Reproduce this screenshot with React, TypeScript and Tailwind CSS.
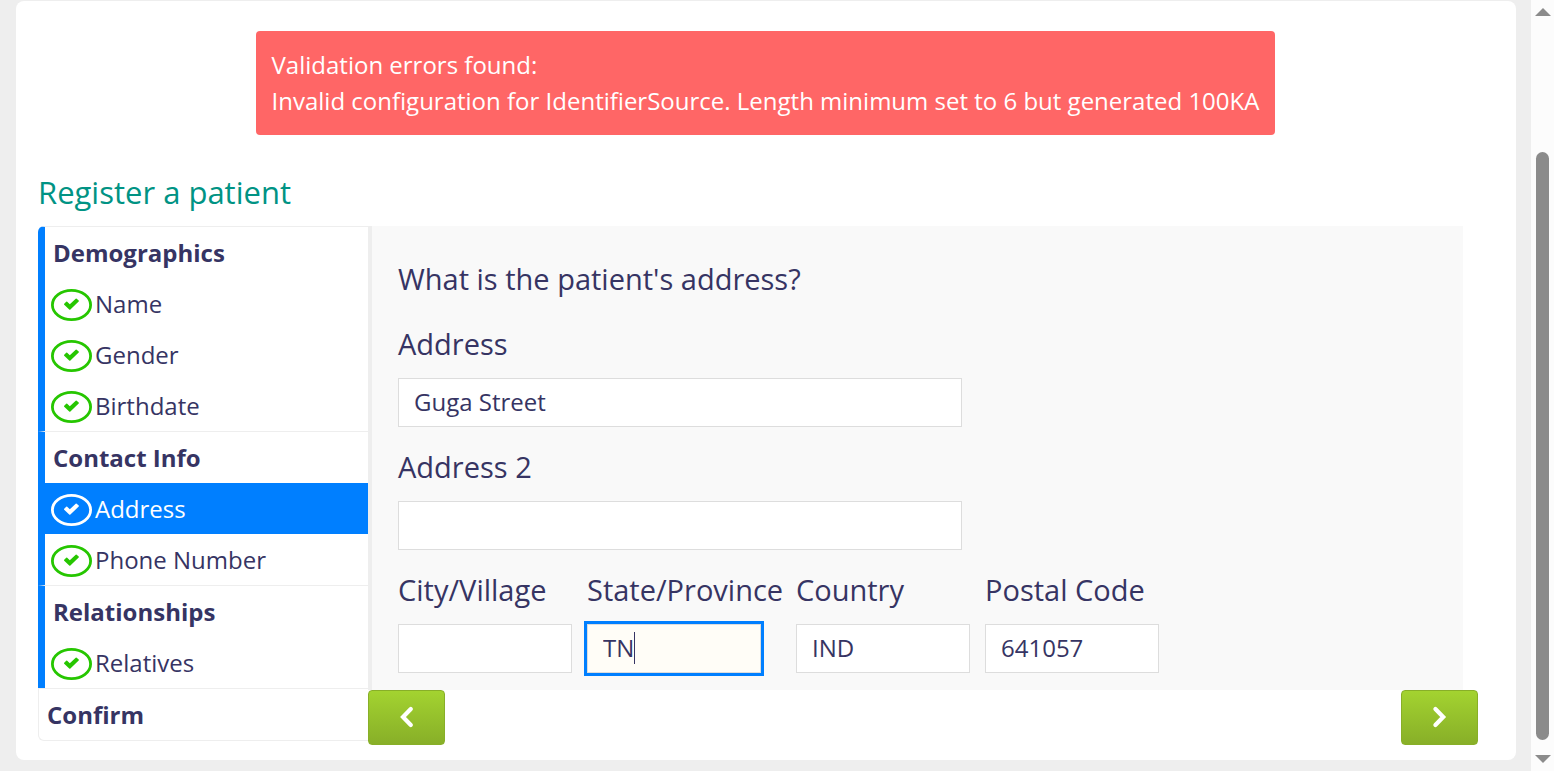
import React, { useState } from 'react';

type Step = { label: string; active?: boolean };
type Section = { title: string; steps: Step[] };

const sections: Section[] = [
  { title: 'Demographics', steps: [{ label: 'Name' }, { label: 'Gender' }, { label: 'Birthdate' }] },
  { title: 'Contact Info', steps: [{ label: 'Address', active: true }, { label: 'Phone Number' }] },
  { title: 'Relationships', steps: [{ label: 'Relatives' }] },
];

function CheckBadge() {
  return (
    <svg className="mt-[3px] h-8 w-[41px] shrink-0" viewBox="0 0 41 32" fill="none" aria-hidden="true">
      <ellipse cx="20.5" cy="16" rx="19.1" ry="14.6" stroke="currentColor" strokeWidth="2.8" />
      <path
        d="M13.2 14.8l2-2q.5-.5 1 0l2.6 2.5 5.9-5.6q.5-.5 1 0l2 1.9q.5.5 0 1l-8.3 8q-.6.5-1.2 0l-5-4.8q-.5-.5 0-1z"
        fill="currentColor"
      />
    </svg>
  );
}

function Chevron({ back }: { back?: boolean }) {
  return (
    <svg className="mb-0.5 h-6 w-4" viewBox="0 0 16 24" fill="none" aria-hidden="true">
      <path
        d={back ? 'M11.8 4L4 12l7.8 8' : 'M3.4 4l7.8 8-7.8 8'}
        stroke="white"
        strokeWidth="4.2"
        strokeLinecap="round"
        strokeLinejoin="miter"
      />
    </svg>
  );
}

function Sidebar() {
  return (
    <nav className="w-[330px] shrink-0 self-start text-2xl text-[#363463]">
      <ul>
        {sections.map((section, i) => (
          <li
            key={section.title}
            className={
              'border-t border-l-[7px] border-t-[#eeeeee] border-l-[#007fff]' + (i === 0 ? ' rounded-tl-md' : '')
            }
          >
            <h2 className="flex h-[51px] items-center pt-px pl-2 font-bold">{section.title}</h2>
            <ul>
              {section.steps.map((step) => (
                <li key={step.label} className={step.active ? 'bg-[#007fff] text-white' : 'text-[#26c600]'}>
                  <a href="#" className="flex h-[51px] items-center gap-[3px] pl-1.5">
                    <CheckBadge />
                    <span className={step.active ? 'text-white' : 'text-[#363463]'}>{step.label}</span>
                  </a>
                </li>
              ))}
            </ul>
          </li>
        ))}
        <li className="rounded-bl-md border border-r-0 border-[#eeeeee]">
          <h2 className="flex h-[51px] items-center pt-px pl-2 font-bold">Confirm</h2>
        </li>
      </ul>
    </nav>
  );
}

type FieldProps = { id: string; label: string; initial?: string; wide?: boolean; active?: boolean };

function Field({ id, label, initial = '', wide, active }: FieldProps) {
  const [value, setValue] = useState(initial);
  return (
    <div className="flex flex-col items-start">
      <label htmlFor={id} className="h-[58px] text-[29px] leading-12 whitespace-nowrap">
        {label}
      </label>
      <div className={'relative ' + (wide ? 'w-[564px]' : 'w-[174px]')}>
        <input
          id={id}
          value={value}
          onChange={(e) => setValue(e.target.value)}
          className={
            'h-[49px] w-full border border-[#dddddd] px-[15px] pb-0.5 text-2xl outline-none ' +
            (active ? 'bg-[#fffdf7] ring-3 ring-[#007fff]' : 'bg-white')
          }
        />
        {active && <span className="absolute top-2 left-[47px] h-8 w-px bg-[#363463]" />}
      </div>
    </div>
  );
}

const navButton =
  'flex h-[55px] w-[77px] items-center justify-center rounded border border-[#88af28] bg-linear-to-b from-[#a3d330] to-[#88af28]';

export default function App() {
  return (
    <div className="flex min-h-screen bg-[#eeeeee] font-['Open_Sans',sans-serif]">
      <main className="mt-px mr-[15px] mb-[11px] ml-4 min-w-0 flex-1 rounded-lg bg-white pt-[30px] pr-[38px] pb-[15px] pl-[22px]">
        <div role="alert" className="ml-[15px] flex justify-center">
          <div className="rounded bg-[#ff6666] p-4 text-2xl leading-9 text-white">
            <p>Validation errors found:</p>
            <p>Invalid configuration for IdentifierSource. Length minimum set to 6 but generated 100KA</p>
          </div>
        </div>

        <h1 className="mt-[33px] mb-2.5 text-[31px] leading-12 text-[#009384]">Register a patient</h1>

        <div className="flex">
          <Sidebar />
          <div className="min-w-0 flex-1">
            <form className="mr-[15px] border-l-4 border-[#eeeeee] bg-[#f9f9f9] pb-[17px] pl-[26px] text-[#363463]">
              <h2 className="pt-[29px] pb-[17px] text-[29px] leading-12">What is the patient's address?</h2>
              <div className="flex flex-col gap-4">
                <Field id="address1" label="Address" initial="Guga Street" wide />
                <Field id="address2" label="Address 2" wide />
                <div className="grid grid-cols-[174px_194px_174px_174px] gap-[15px]">
                  <Field id="city" label="City/Village" />
                  <Field id="state" label="State/Province" initial="TN" active />
                  <Field id="country" label="Country" initial="IND" />
                  <Field id="postal" label="Postal Code" initial="641057" />
                </div>
              </div>
            </form>
            <div className="flex justify-between">
              <button type="button" aria-label="Previous" className={navButton}>
                <Chevron back />
              </button>
              <button type="button" aria-label="Next" className={navButton}>
                <Chevron />
              </button>
            </div>
          </div>
        </div>
      </main>

      <div className="flex w-[23px] shrink-0 flex-col items-center bg-[#fcfcfc] pt-2 pb-2" aria-hidden="true">
        <svg className="h-2 w-4" viewBox="0 0 16 8">
          <path d="M8 0l8 8H0z" fill="#8b8b8b" />
        </svg>
        <div className="mt-[136px] mb-[15px] w-[13px] flex-1 rounded-full bg-[#8b8b8b]" />
        <svg className="h-2 w-4" viewBox="0 0 16 8">
          <path d="M0 0h16L8 8z" fill="#8b8b8b" />
        </svg>
      </div>
    </div>
  );
}
